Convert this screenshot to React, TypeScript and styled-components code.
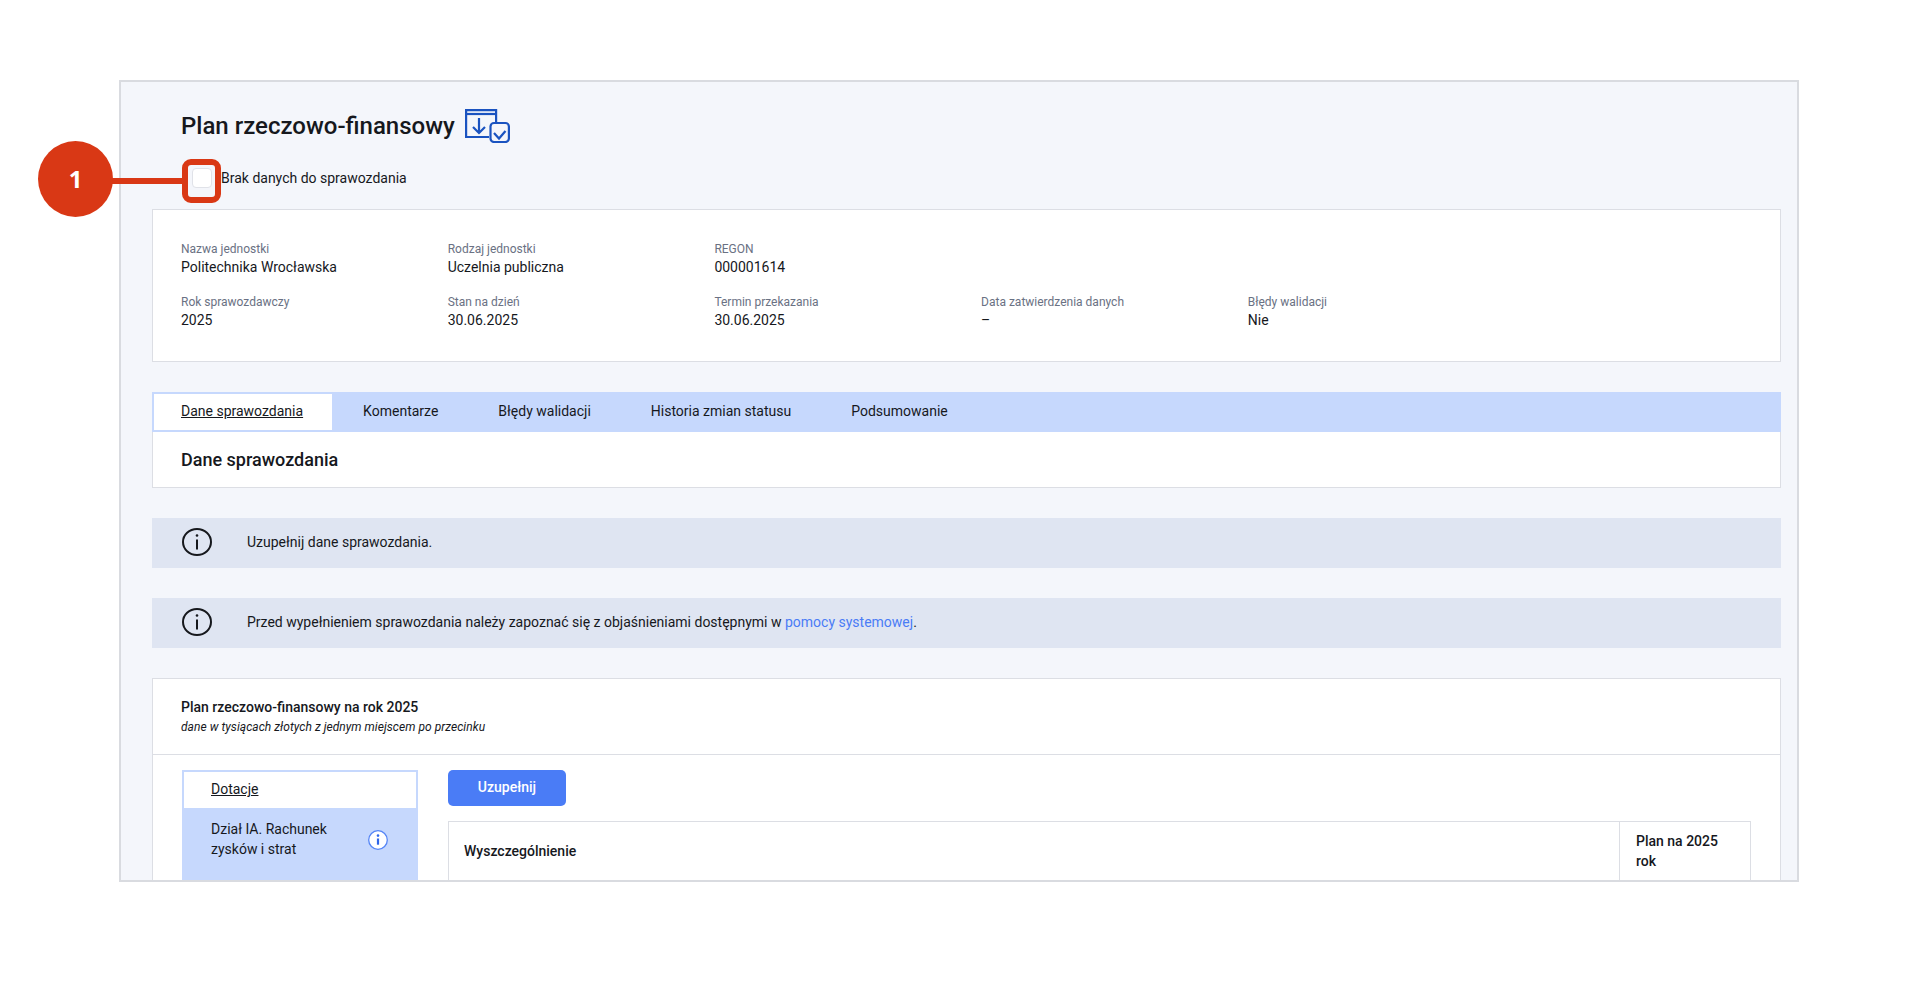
import React from "react";
import styled, { createGlobalStyle } from "styled-components";

const Global = createGlobalStyle`
  html, body { margin: 0; padding: 0; background: #fff; }
  body { font-family: Roboto, "Liberation Sans", sans-serif; color: #16181d; }
  #root { position: relative; height: 1002px; overflow: hidden; }
`;

const Page = styled.div`
  padding: 80px 0 0 119px;
`;
const Frame = styled.div`
  box-sizing: border-box;
  width: 1680px;
  height: 802px;
  overflow: hidden;
  border: 2px solid #d9dbe0;
  background: #f4f6fb;
  padding: 0 16px 0 31px;
`;
const TitleRow = styled.div`
  display: flex;
  align-items: center;
  gap: 10px;
  height: 65px;
  padding: 22px 0 0 29px;
  box-sizing: border-box;
`;
const Title = styled.h1`
  margin: 0;
  font-size: 24px;
  line-height: 32px;
  font-weight: 500;
`;
const CheckRow = styled.label`
  display: flex;
  align-items: center;
  height: 20px;
  margin: 21px 0 0 40px;
  font-size: 14px;
  gap: 9px;
`;
const Check = styled.span`
  box-sizing: border-box;
  width: 20px;
  height: 20px;
  background: #fff;
  border: 1px solid #e0e2e8;
  border-radius: 4px;
`;
const Card = styled.section`
  box-sizing: border-box;
  background: #fff;
  border: 1px solid #dcdee4;
`;
const InfoCard = styled(Card)`
  margin-top: 21px;
  height: 153px;
  padding: 31px 28px;
`;
const Fields = styled.div`
  display: grid;
  grid-template-columns: repeat(5, 266.7px);
  row-gap: 17px;
`;
const Field = styled.div`
  display: flex;
  flex-direction: column;
  height: 36px;
  justify-content: space-between;
`;
const FieldLabel = styled.span`
  font-size: 12px;
  line-height: 16px;
  color: #6a7183;
`;
const FieldValue = styled.span`
  font-size: 14px;
  line-height: 20px;
`;
const Tabs = styled.nav`
  display: flex;
  margin-top: 30px;
  height: 40px;
  background: #c6d8fd;
`;
const Tab = styled.a<{ $active?: boolean }>`
  box-sizing: border-box;
  display: flex;
  align-items: center;
  height: 40px;
  padding: 0 30px 2px;
  font-size: 14px;
  ${(p) =>
    p.$active &&
    `background:#fff;padding:0 29px 2px 27px;margin-right:-1px;border:2px solid #c6d8fd;text-decoration:underline;`}
`;
const TabPanel = styled.div`
  box-sizing: border-box;
  height: 56px;
  display: flex;
  align-items: center;
  padding-left: 28px;
  background: #fff;
  border: 1px solid #dcdee4;
  border-top: 0;
`;
const PanelTitle = styled.h2`
  margin: 0;
  font-size: 18px;
  font-weight: 500;
`;
const Notice = styled.div`
  display: flex;
  align-items: center;
  box-sizing: border-box;
  height: 50px;
  margin-top: 30px;
  padding: 0 0 2px 30px;
  gap: 35px;
  background: #dfe5f2;
  font-size: 14px;
`;
const NoticeLink = styled.a`
  color: #4a7cf6;
`;
const TableCard = styled(Card)`
  margin-top: 30px;
  height: 300px;
`;
const TableHead = styled.header`
  box-sizing: border-box;
  height: 76px;
  padding: 18px 28px 0;
  border-bottom: 1px solid #dcdee4;
`;
const TableTitle = styled.div`
  font-size: 14px;
  line-height: 20px;
  font-weight: 500;
`;
const TableSub = styled.div`
  font-size: 12px;
  line-height: 20px;
  font-style: italic;
  letter-spacing: 0.045px;
`;
const TableBody = styled.div`
  display: flex;
  gap: 30px;
  padding: 15px 29px 0 29px;
`;
const Side = styled.div`
  flex: 0 0 236px;
  height: 300px;
  background: #c6d8fd;
  border: 2px solid #c6d8fd;
  box-sizing: border-box;
  font-size: 14px;
  line-height: 20px;
`;
const SideActive = styled.a`
  display: block;
  height: 36px;
  background: #fff;
  padding: 7px 0 0 27px;
  box-sizing: border-box;
  text-decoration: underline;
`;
const SideItem = styled.div`
  display: flex;
  align-items: center;
  justify-content: space-between;
  padding: 11px 28px 0 27px;
`;
const SideLabel = styled.span`
  width: 140px;
`;
const Main = styled.div`
  flex: 1;
`;
const Button = styled.button`
  display: block;
  width: 118px;
  height: 36px;
  padding: 0 0 3px;
  border: 0;
  border-radius: 5px;
  background: #4a7cf6;
  color: #fff;
  font: 500 14px Roboto, sans-serif;
`;
const Table = styled.div`
  display: grid;
  grid-template-columns: 1fr 131px;
  margin-top: 15px;
  width: 1303px;
  height: 200px;
  box-sizing: border-box;
  border: 1px solid #dcdee4;
  font-size: 14px;
  font-weight: 500;
  line-height: 20px;
`;
const HeadCell = styled.div`
  padding: 0 15px;
  height: 58px;
  display: flex;
  align-items: center;
  box-sizing: border-box;
  & + & {
    border-left: 1px solid #dcdee4;
    padding: 0 16px;
  }
`;
const Marker = styled.div`
  position: absolute;
  left: 38px;
  top: 141px;
  width: 75px;
  height: 76px;
  padding-bottom: 2px;
  box-sizing: border-box;
  border-radius: 50%;
  background: #d93815;
  color: #fff;
  display: flex;
  align-items: center;
  justify-content: center;
  font: 700 24px "Open Sans", sans-serif;
`;
const MarkerLine = styled.div`
  position: absolute;
  left: 112px;
  top: 178px;
  width: 71px;
  height: 6px;
  background: #d93815;
`;
const MarkerBox = styled.div`
  position: absolute;
  left: 182px;
  top: 159px;
  width: 39px;
  height: 44px;
  box-sizing: border-box;
  border: 6px solid #d93815;
  border-radius: 9px;
`;

const FormIcon = () => (
  <svg width="45" height="34" viewBox="0 0 45 34" fill="none" stroke="#1a53c0" strokeWidth="2.2">
    <path d="M24 28H1.1V1.1h30V13" />
    <path d="M1 5h30" />
    <path d="M14 9v15M8 18l6 6 6-6" />
    <rect x="25.5" y="14" width="18.4" height="19" rx="3.5" fill="#f4f6fb" />
    <path d="M29 24l5 5.5 6.5-7.5" />
  </svg>
);

const InfoIcon = () => (
  <svg width="30" height="28" viewBox="0 0 30 28" fill="none" stroke="#16181d">
    <ellipse cx="15" cy="14" rx="14" ry="13" strokeWidth="2" />
    <path d="M15 11.5v10" strokeWidth="2" />
    <circle cx="15" cy="7.5" r="1.3" fill="#16181d" stroke="none" />
  </svg>
);

const SmallInfoIconSvg = styled.svg`
  margin-top: 1px;
`;
const SmallInfoIcon = () => (
  <SmallInfoIconSvg width="20" height="20" viewBox="0 0 20 20">
    <circle cx="10" cy="10" r="9.3" fill="#fff" stroke="#5585f6" strokeWidth="1.3" />
    <path d="M10 8.5v6.2" stroke="#2f66ea" strokeWidth="2.2" />
    <circle cx="10" cy="5.6" r="1.3" fill="#2f66ea" />
  </SmallInfoIconSvg>
);

const fields: [string, string][] = [
  ["Nazwa jednostki", "Politechnika Wrocławska"],
  ["Rodzaj jednostki", "Uczelnia publiczna"],
  ["REGON", "000001614"],
];
const fields2: [string, string][] = [
  ["Rok sprawozdawczy", "2025"],
  ["Stan na dzień", "30.06.2025"],
  ["Termin przekazania", "30.06.2025"],
  ["Data zatwierdzenia danych", "–"],
  ["Błędy walidacji", "Nie"],
];

const Cols = styled.div`
  display: contents;
`;
const Empty = styled.div`
  grid-column: span 2;
`;

export default function App() {
  const tab = ["Komentarze", "Błędy walidacji", "Historia zmian statusu", "Podsumowanie"];
  const renderField = ([l, v]: [string, string]) => (
    <Field key={l}>
      <FieldLabel>{l}</FieldLabel>
      <FieldValue>{v}</FieldValue>
    </Field>
  );
  return (
    <>
      <Global />
      <Page>
        <Frame>
          <TitleRow>
            <Title>Plan rzeczowo-finansowy</Title>
            <FormIcon />
          </TitleRow>
          <CheckRow>
            <Check />
            Brak danych do sprawozdania
          </CheckRow>
          <InfoCard>
            <Fields>
              <Cols>{fields.map(renderField)}</Cols>
              <Empty />
              <Cols>{fields2.map(renderField)}</Cols>
            </Fields>
          </InfoCard>
          <Tabs>
            <Tab $active>Dane sprawozdania</Tab>
            {tab.map((t) => (
              <Tab key={t}>{t}</Tab>
            ))}
          </Tabs>
          <TabPanel>
            <PanelTitle>Dane sprawozdania</PanelTitle>
          </TabPanel>
          <Notice>
            <InfoIcon />
            <span>Uzupełnij dane sprawozdania.</span>
          </Notice>
          <Notice>
            <InfoIcon />
            <span>
              Przed wypełnieniem sprawozdania należy zapoznać się z objaśnieniami dostępnymi w{" "}
              <NoticeLink>pomocy systemowej</NoticeLink>.
            </span>
          </Notice>
          <TableCard>
            <TableHead>
              <TableTitle>Plan rzeczowo-finansowy na rok 2025</TableTitle>
              <TableSub>dane w tysiącach złotych z jednym miejscem po przecinku</TableSub>
            </TableHead>
            <TableBody>
              <Side>
                <SideActive>Dotacje</SideActive>
                <SideItem>
                  <SideLabel>Dział IA. Rachunek zysków i strat</SideLabel>
                  <SmallInfoIcon />
                </SideItem>
              </Side>
              <Main>
                <Button>Uzupełnij</Button>
                <Table>
                  <HeadCell>Wyszczególnienie</HeadCell>
                  <HeadCell>Plan na 2025 rok</HeadCell>
                </Table>
              </Main>
            </TableBody>
          </TableCard>
        </Frame>
      </Page>
      <MarkerLine />
      <MarkerBox />
      <Marker>1</Marker>
    </>
  );
}
